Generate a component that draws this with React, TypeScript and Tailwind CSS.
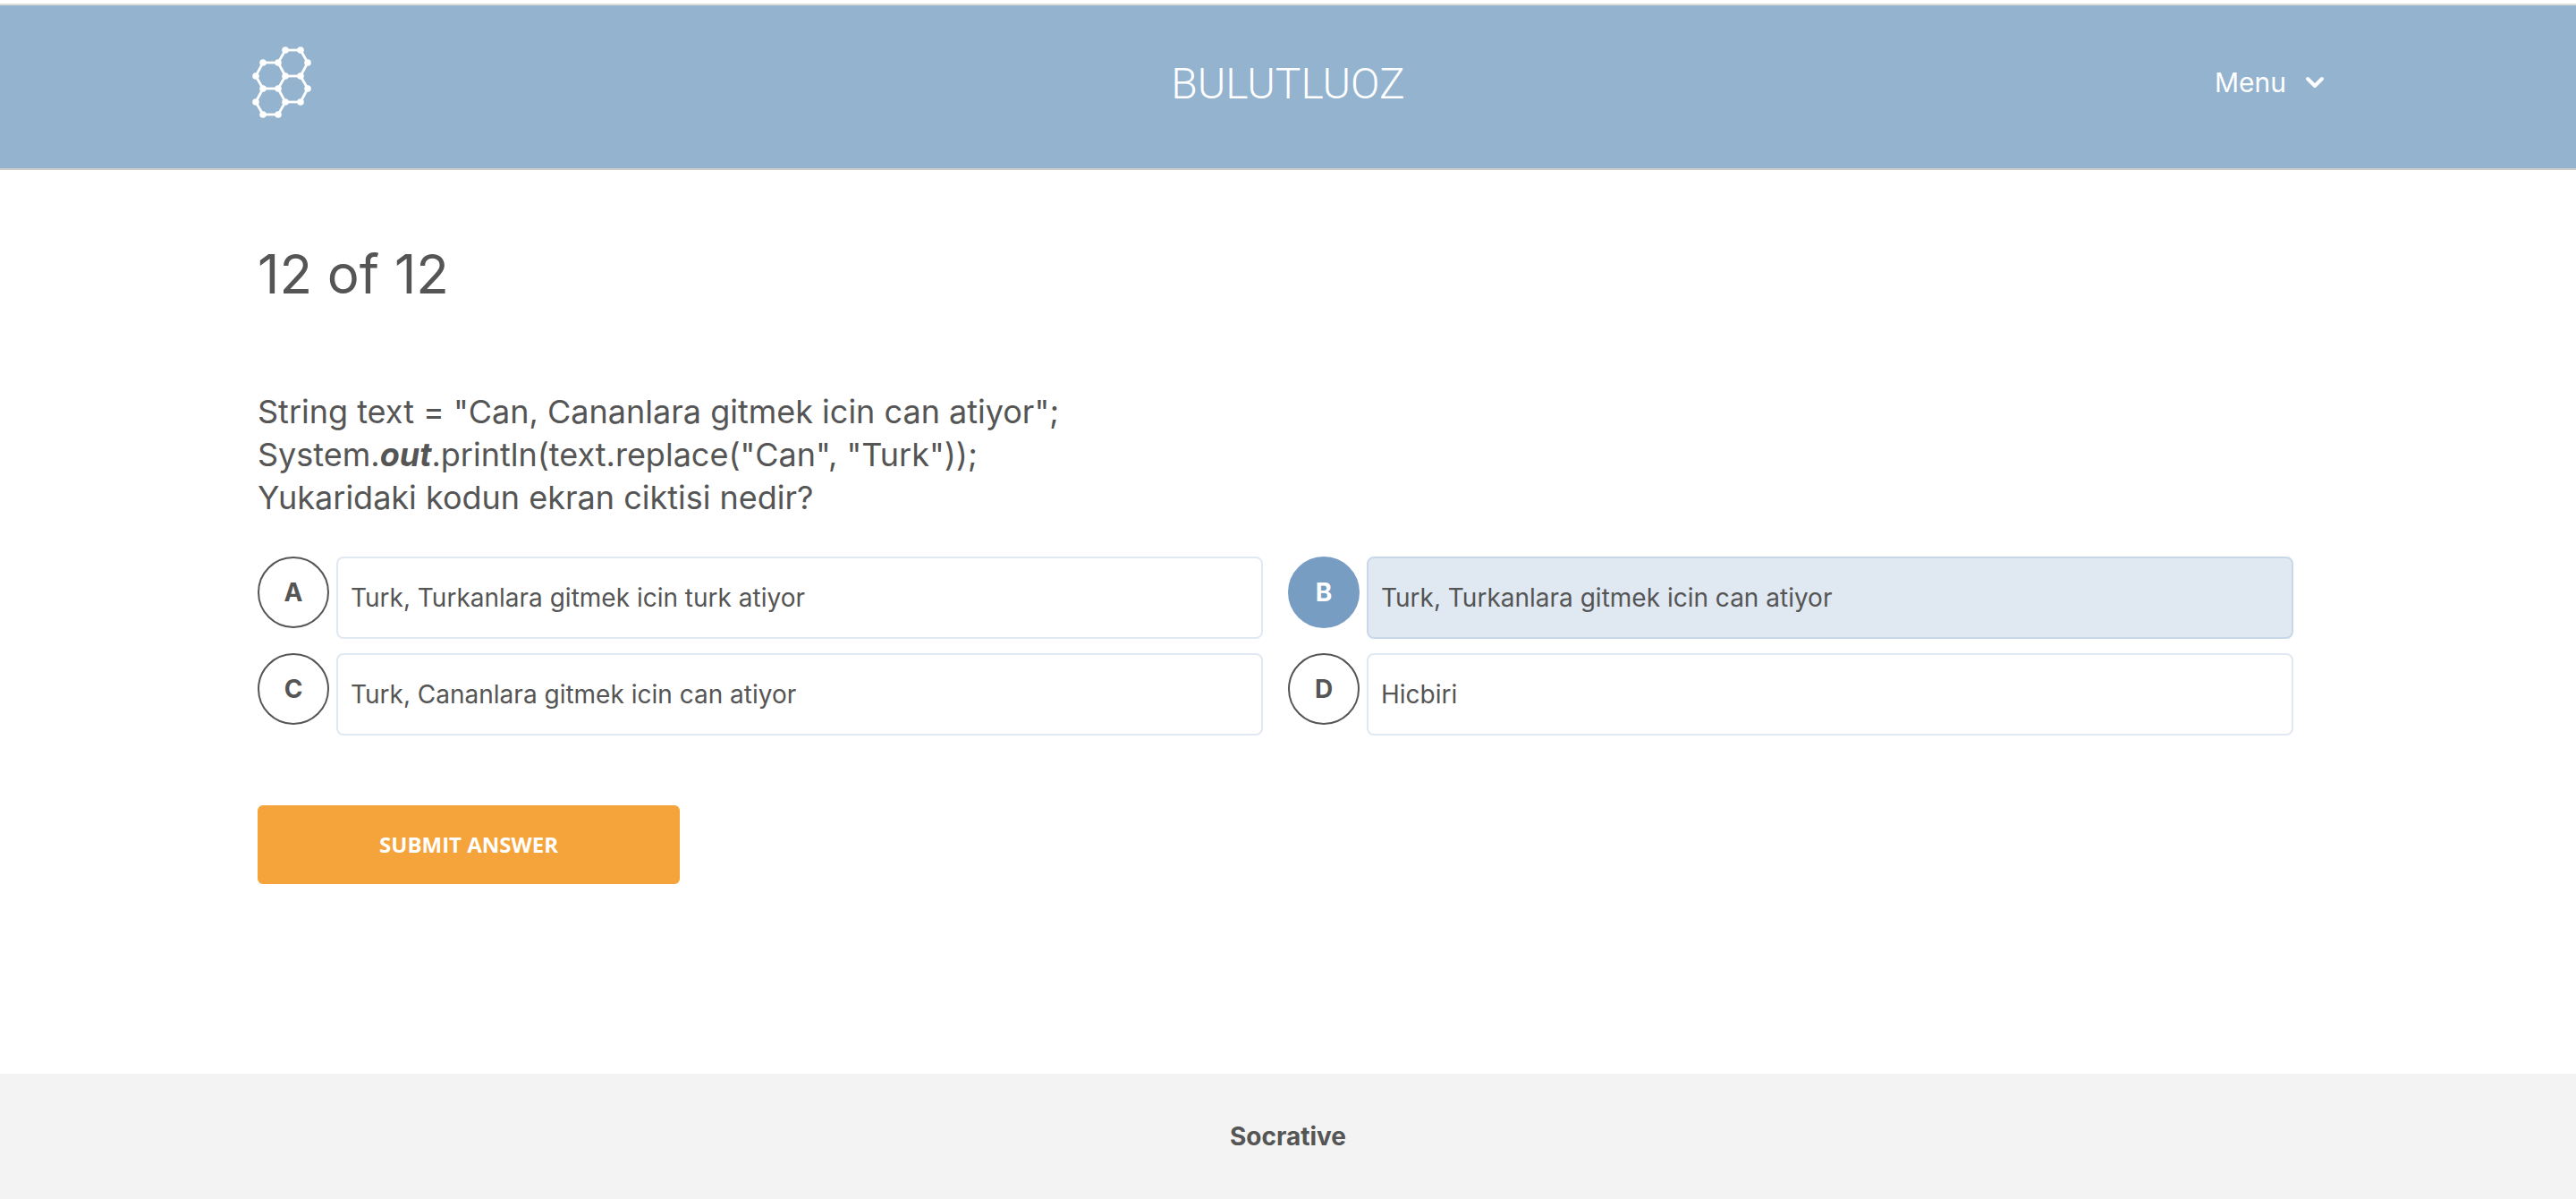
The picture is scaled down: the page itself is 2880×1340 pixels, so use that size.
import { useState } from "react";

const answers = [
  { id: "A", text: "Turk, Turkanlara gitmek icin turk atiyor" },
  { id: "B", text: "Turk, Turkanlara gitmek icin can atiyor" },
  { id: "C", text: "Turk, Cananlara gitmek icin can atiyor" },
  { id: "D", text: "Hicbiri" },
];

// Vertices and bonds of the four-ring molecule logo.
const nodes: [number, number][] = [
  [35, 4], [52, 4], [10, 18], [27, 18], [60, 18], [2, 33], [35, 33], [52, 33],
  [10, 47], [27, 47], [60, 47], [2, 62], [35, 62], [52, 62], [10, 76], [27, 76],
];
const bonds: [number, number][] = [
  [0, 1], [0, 3], [1, 4], [2, 3], [2, 5], [3, 6], [4, 7], [6, 7], [5, 8], [6, 9],
  [7, 10], [8, 9], [8, 11], [9, 12], [10, 13], [12, 13], [11, 14], [12, 15], [14, 15],
];

function Logo() {
  return (
    <svg viewBox="-2 0 66 80" className="h-20 w-[66px]" role="img" aria-label="Socrative">
      <g stroke="#fff" strokeWidth="2.8">
        {bonds.map(([a, b]) => (
          <line key={`${a}-${b}`} x1={nodes[a][0]} y1={nodes[a][1]} x2={nodes[b][0]} y2={nodes[b][1]} />
        ))}
      </g>
      <g fill="#fff">
        {nodes.map(([x, y]) => (
          <circle key={`${x}-${y}`} cx={x} cy={y} r="3.8" />
        ))}
      </g>
    </svg>
  );
}

function Header() {
  return (
    <header className="mt-1 border-y-2 border-t-[#dcdcdc] border-b-[#cccccc] bg-[#93b3cf] text-white">
      <div className="mx-[280px] grid h-[182px] grid-cols-3 items-start pt-[46px]">
        <div className="pl-0.5">
          <Logo />
        </div>
        <p className="justify-self-center pt-3.5 font-['Roboto',sans-serif] text-5xl leading-[56px] font-light">BULUTLUOZ</p>
        <button type="button" className="flex items-center gap-5 justify-self-end pt-[22px] text-3xl leading-9">
          Menu
          <svg viewBox="0 0 24 16" className="h-4 w-6" fill="none" stroke="#fff" strokeWidth="4" strokeLinecap="round" strokeLinejoin="round" aria-hidden="true">
            <path d="M4 4l8 8 8-8" />
          </svg>
        </button>
      </div>
    </header>
  );
}

export default function App() {
  const [selected, setSelected] = useState("B");
  return (
    <div className="flex min-h-screen flex-col bg-white font-['Inter',sans-serif] text-[#555555]">
      <Header />
      <main className="grow pr-[316px] pl-[288px]">
        <h1 className="pt-20 text-6xl leading-[72px]">12 of 12</h1>
        <form onSubmit={(e) => e.preventDefault()}>
          <fieldset>
            <legend className="pt-[94px] text-4xl leading-[48px]">
              String text = "Can, Cananlara gitmek icin can atiyor";
              <br />
              System.<strong><em>out</em></strong>.println(text.replace("Can", "Turk"));
              <br />
              Yukaridaki kodun ekran ciktisi nedir?
            </legend>
            <div className="mt-[42px] grid grid-cols-2 gap-x-7 gap-y-4">
              {answers.map(({ id, text }) => (
                <label key={id} className="group flex cursor-pointer items-start gap-2 text-[28px] leading-9">
                  <input
                    type="radio"
                    name="answer"
                    value={id}
                    checked={selected === id}
                    onChange={() => setSelected(id)}
                    className="sr-only"
                  />
                  <span className="flex size-20 shrink-0 items-center justify-center rounded-full border-2 border-[#555555] font-bold group-has-[:checked]:border-[#789dc2] group-has-[:checked]:bg-[#789dc2] group-has-[:checked]:text-white">
                    {id}
                  </span>
                  <span className="h-[92px] grow rounded-lg border-2 border-[#e0e8f1] px-3.5 py-[26px] group-has-[:checked]:border-[#c8d8e8] group-has-[:checked]:bg-[#e0e8f1]">
                    {text}
                  </span>
                </label>
              ))}
            </div>
          </fieldset>
          <button type="submit" className="mt-[78px] h-[88px] w-[472px] rounded-md bg-[#f5a33b] font-['Open_Sans',sans-serif] text-2xl font-bold text-white">
            SUBMIT ANSWER
          </button>
        </form>
      </main>
      <footer className="flex h-[140px] items-center justify-center bg-[#f3f3f3] text-[28px] leading-9 font-bold">
        Socrative
      </footer>
    </div>
  );
}
